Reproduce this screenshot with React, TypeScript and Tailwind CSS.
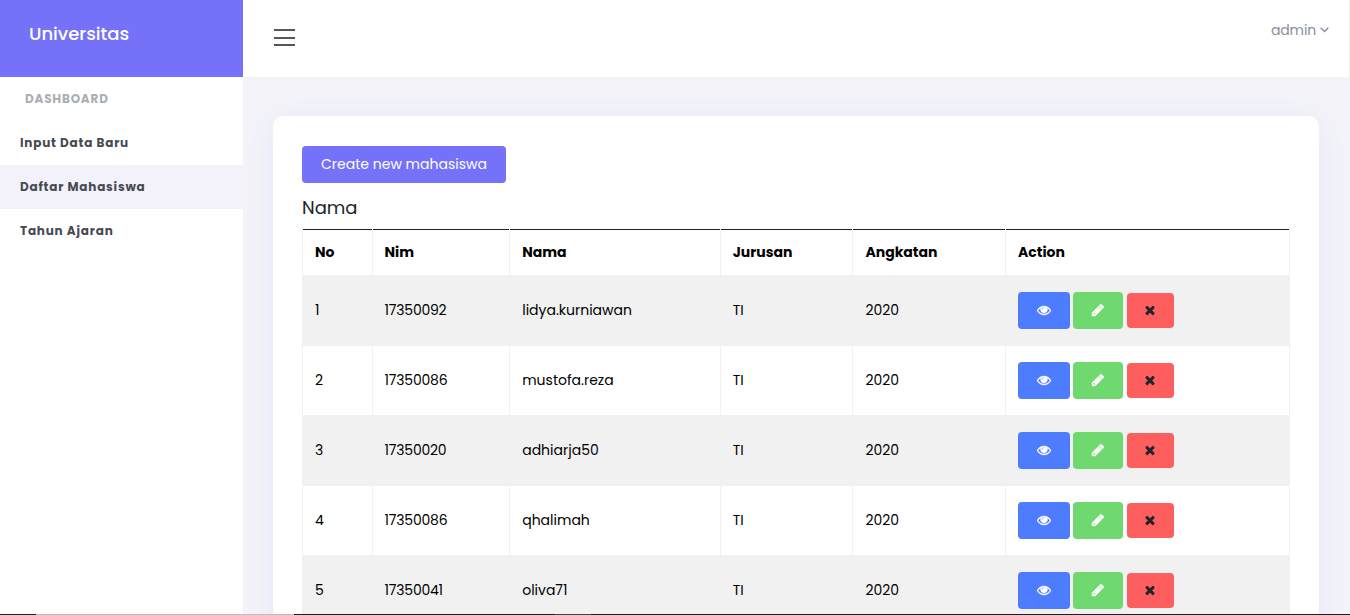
import React from "react";

const rows = [
  { no: "1", nim: "17350092", nama: "lidya.kurniawan" },
  { no: "2", nim: "17350086", nama: "mustofa.reza" },
  { no: "3", nim: "17350020", nama: "adhiarja50" },
  { no: "4", nim: "17350086", nama: "qhalimah" },
  { no: "5", nim: "17350041", nama: "oliva71" },
];

const heads = ["No", "Nim", "Nama", "Jurusan", "Angkatan", "Action"];

const COLS = "grid grid-cols-[69.6px_137.6px_210.6px_132.6px_152.6px_285px]";

const EYE =
  "M1664 960q-152-236-381-353 61 104 61 225 0 185-131.500 316.500t-316.500 131.500-316.500-131.500-131.500-316.500q0-121 61-225-229 117-381 353 133 205 333.500 326.500t434.500 121.500 434.500-121.500 333.500-326.500zM944 576q0-20-14-34t-34-14q-125 0-214.500 89.500t-89.500 214.500q0 20 14 34t34 14 34-14 14-34q0-86 61-147t147-61q20 0 34-14t14-34zM1792 960q0 34-20 69-140 230-376.500 368.500t-499.500 138.500-499.500-139-376.500-368q-20-35-20-69t20-69q140-229 376.500-368t499.500-139 499.500 139 376.500 368q20 35 20 69z";
const PENCIL =
  "M491 1536l91-91-235-235-91 91v107h128v128h107zM1014 608q0-22-22-22-10 0-17 7l-542 542q-7 7-7 17 0 22 22 22 10 0 17-7l542-542q7-7 7-17zM960 416l416 416-832 832h-416v-416zM1643 512q0 53-37 90l-166 166-416-416 166-165q36-38 90-38 53 0 91 38l235 234q37 39 37 91z";
const TIMES =
  "M1490 1322q0 40-28 68l-136 136q-28 28-68 28t-68-28l-294-294-294 294q-28 28-68 28t-68-28l-136-136q-28-28-28-68t28-68l294-294-294-294q-28-28-28-68t28-68l136-136q28-28 68-28t68 28l294 294 294-294q28-28 68-28t68 28l136 136q28 28 28 68t-28 68l-294 294 294 294q28 28 28 68z";

function Icon({ d, className }: { d: string; className: string }) {
  return (
    <svg viewBox="0 0 1792 1792" className={className} fill="currentColor" stroke="currentColor">
      <path d={d} />
    </svg>
  );
}

function Sidebar() {
  return (
    <aside className="flex w-[243px] shrink-0 flex-col bg-white">
      <div className="h-[77px] bg-[#7571f9] pl-[29px] pt-5">
        <span className="block text-[18px] font-medium leading-[27px] text-white">Universitas</span>
      </div>
      <div className="flex h-11 items-center pl-[25px] text-[12px] font-bold tracking-[0.8px] text-[#abafb3]">DASHBOARD</div>
      <nav className="flex flex-col text-[12px] font-bold tracking-[0.8px] text-[#464a53]">
        <a className="flex h-11 items-center pl-5">Input Data Baru</a>
        <a className="flex h-11 items-center bg-[#f3f1fa] pl-5">Daftar Mahasiswa</a>
        <a className="flex h-11 items-center pl-5">Tahun Ajaran</a>
      </nav>
    </aside>
  );
}

function Header() {
  return (
    <header className="flex h-[77px] shrink-0 justify-between border-r border-[#eeeeee] bg-white pl-[31px] pr-5">
      <div className="flex flex-col gap-[5.5px] pt-[29px]">
        <i className="h-[2px] w-[21px] bg-[#55565a]" />
        <i className="h-[2px] w-[21px] bg-[#55565a]" />
        <i className="h-[2px] w-[21px] bg-[#55565a]" />
      </div>
      <div className="flex h-[60px] items-center gap-1 text-[14px] text-[#868e9b]">
        <span className="tracking-[-0.15px]">admin</span>
        <svg viewBox="0 0 9 6" className="h-[6px] w-[9px]" fill="none" stroke="currentColor" strokeWidth="1.4">
          <path d="M0.7 0.8L4.5 4.6L8.3 0.8" />
        </svg>
      </div>
    </header>
  );
}

function DataTable() {
  return (
    <div className="mt-[9px] w-[988px] text-[14px] text-black">
      <div className={`${COLS} h-[46px]`}>
        {heads.map((h) => (
          <div key={h} className="flex flex-col border-l border-[#f1f1f1] last:border-r">
            <div className="h-px bg-[#212529]" />
            <div className="flex h-[45px] items-center pl-3 font-bold">{h}</div>
          </div>
        ))}
      </div>
      {rows.map((r, i) => (
        <div key={i} className={`${COLS} h-[70px] border-t border-[#f1f1f1] odd:bg-white even:bg-[#f1f1f1] [&>div]:-mt-px`}>
          <div className="flex items-center border-l border-[#f1f1f1] pl-3">{r.no}</div>
          <div className="flex items-center border-l border-[#f1f1f1] pl-3 tracking-[-0.22px]">{r.nim}</div>
          <div className="flex items-center border-l border-[#f1f1f1] pl-3">{r.nama}</div>
          <div className="flex items-center border-l border-[#f1f1f1] pl-3">TI</div>
          <div className="flex items-center border-l border-[#f1f1f1] pl-3">2020</div>
          <div className="flex items-center border-x border-[#f1f1f1] pl-3">
            <button className="mr-[3px] flex h-[37px] w-[52px] items-center justify-center rounded-[4px] bg-[#4d7cff] text-white">
              <Icon d={EYE} className="size-[14px] stroke-[50]" />
            </button>
            <button className="mr-1 flex h-[37px] w-[50px] items-center justify-center rounded-[4px] bg-[#6fd96f] text-white">
              <Icon d={PENCIL} className="size-[14px] stroke-[50]" />
            </button>
            <button className="flex h-[35px] w-[47px] items-center justify-center rounded-[4px] bg-[#ff5e5e] pr-px text-[#212529]">
              <Icon d={TIMES} className="size-[14px] stroke-0" />
            </button>
          </div>
        </div>
      ))}
    </div>
  );
}

export default function App() {
  return (
    <div className="relative flex h-[615px] w-[1350px] overflow-hidden bg-[#f3f3f9] font-[Poppins,Inter,sans-serif]">
      <Sidebar />
      <div className="flex min-w-0 flex-1 flex-col">
        <Header />
        <main className="h-[538px] overflow-hidden pl-[30px] pr-[31px] pt-[39px]">
          <section className="h-[700px] rounded-[10px] bg-white pl-[29px] pt-[30px] shadow-[0_6px_30px_rgba(115,103,240,0.09)]">
            <button className="flex h-[37px] w-[204px] items-center justify-center rounded-[4px] bg-[#7571f9] text-[14px] text-white">
              Create new mahasiswa
            </button>
            <h4 className="mt-3 h-[25px] text-[18px] font-normal leading-[26px] text-[#212529]">Nama</h4>
            <DataTable />
          </section>
        </main>
      </div>
      <div className="absolute bottom-0 left-0 flex h-px w-full bg-[#1d1d1f]">
        <i className="ml-9 w-[258px] bg-[#bdbdbd]" />
        <i className="ml-[261px] w-9 bg-[#444444]" />
      </div>
    </div>
  );
}
